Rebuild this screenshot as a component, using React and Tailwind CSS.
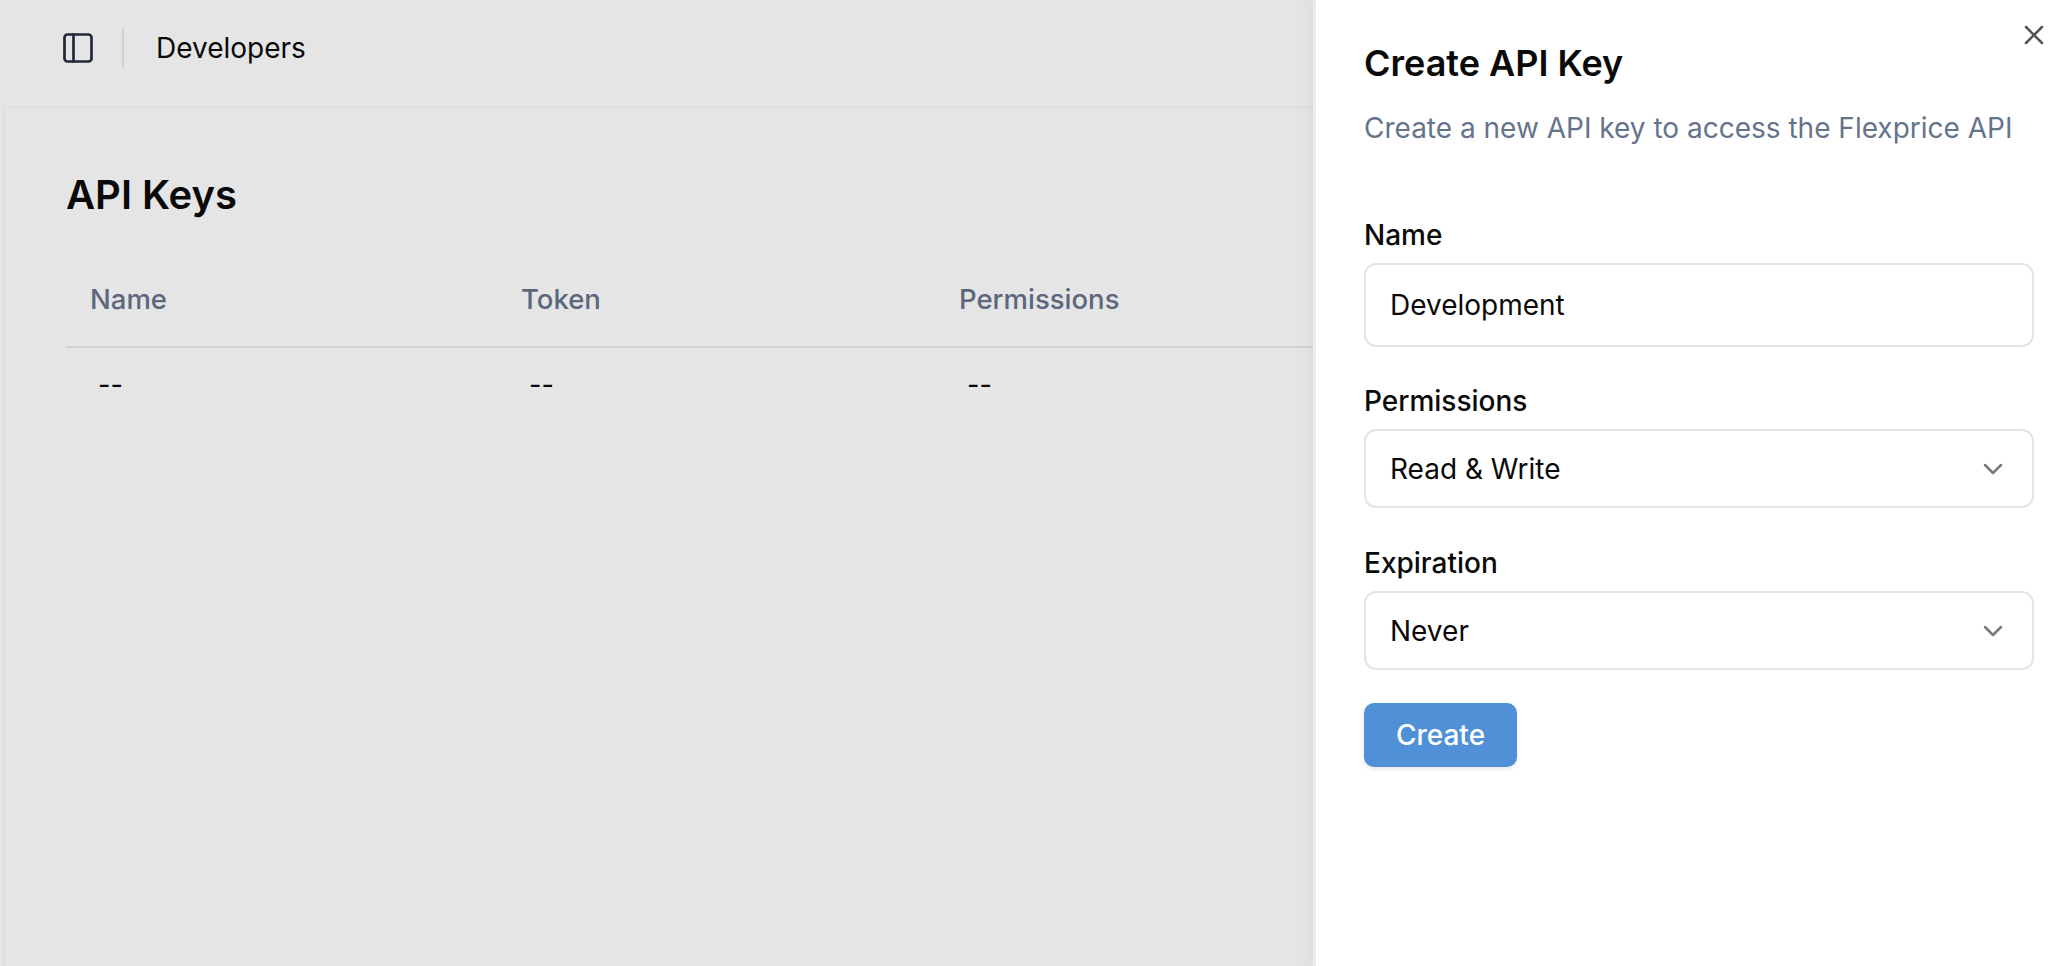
import { ChevronDown, PanelLeft, X } from "lucide-react";

function Field({ label, children }) {
  return (
    <div className="flex flex-col">
      <label className="text-[28px] leading-[32px] font-medium text-[#0a0a0a] mb-[12px]">{label}</label>
      {children}
    </div>
  );
}

function Select({ value }) {
  return (
    <div className="flex h-[79px] items-center justify-between rounded-[12px] border-2 border-[#e4e4e7] bg-white pl-[24px] pr-[23px] text-[28px] text-[#0a0a0a]">
      <span>{value}</span>
      <ChevronDown size={32} strokeWidth={1.9} className="text-[#7a7a7a]" />
    </div>
  );
}

export default function App() {
  const columns = ["Name", "Token", "Permissions"];
  const widths = ["w-[431px]", "w-[438px]", "flex-1"];

  return (
    <div className="flex h-screen overflow-hidden bg-[#e5e5e5] font-['Inter',sans-serif]">
      <div className="flex min-w-0 flex-1 flex-col pl-[2px]">
        <header className="flex h-[108px] shrink-0 items-center border-b-2 border-[#e0e0e0] pb-[10px] pl-[58px]">
          <PanelLeft size={36} strokeWidth={1.8} className="text-[#1e293b]" />
          <div className="ml-[26px] h-[40px] w-[2px] bg-[#d0d0d3]" />
          <span className="ml-[32px] text-[28px] text-[#0a0a0a]">Developers</span>
        </header>
        <main className="flex-1 border-l-[4px] border-[#e0e0e0] pl-[60px] pt-[62px]">
          <h1 className="text-[40px] leading-[50px] font-semibold text-[#0a0a0a]">API Keys</h1>
          <div className="mt-[30px] flex h-[98px] items-center border-b-2 border-[#cfd3d9] pl-[24px] pt-[4px]">
            {columns.map((c, i) => (
              <div key={c} className={`${widths[i]} text-[27.5px] font-medium text-[#5b677d]`}>{c}</div>
            ))}
          </div>
          <div className="flex h-[72px] items-center pl-[32px] pt-[2px]">
            {columns.map((c, i) => (
              <div key={c} className={`${widths[i]} text-[27px] text-[#0a0a0a]`}>--</div>
            ))}
          </div>
        </main>
      </div>
      <aside className="relative w-[748px] shrink-0 border-l-[3px] border-[#ececec] bg-white pl-[48px] pr-[27px] pt-[40px] shadow-[-8px_0_14px_rgba(0,0,0,0.03)]">
        <button className="absolute right-[11px] top-[19px] text-[#555555]">
          <X size={32} strokeWidth={1.9} />
        </button>
        <h2 className="text-[36px] leading-[46px] font-semibold text-[#0a0a0a]">Create API Key</h2>
        <p className="mt-[23px] text-[28px] leading-[38px] text-[#64748b]">Create a new API key to access the Flexprice API</p>
        <div className="mt-[72px] flex flex-col gap-[38px]">
          <Field label="Name">
            <div className="flex h-[84px] items-center rounded-[12px] border-2 border-[#e4e4e7] bg-white pl-[24px] text-[28px] text-[#0a0a0a]">Development</div>
          </Field>
          <Field label="Permissions">
            <Select value="Read & Write" />
          </Field>
          <div className="mt-px">
            <Field label="Expiration">
              <Select value="Never" />
            </Field>
          </div>
        </div>
        <button className="mt-[33px] h-[64px] w-[153px] rounded-[10px] bg-[#5090d6] text-[28px] font-medium text-white shadow-[0_2px_4px_rgba(0,0,0,0.1)]">Create</button>
      </aside>
    </div>
  );
}
